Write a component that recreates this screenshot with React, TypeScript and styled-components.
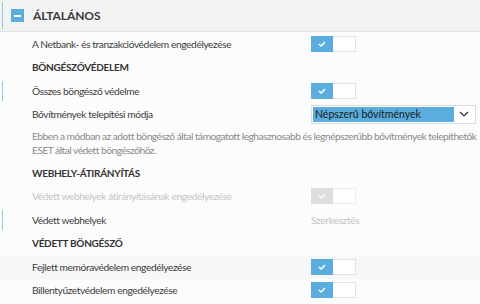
import styled, { createGlobalStyle } from 'styled-components';

const GlobalStyle = createGlobalStyle`
  html, body {
    margin: 0;
    padding: 0;
    background: #fcfcfc;
    font-family: Lato, "Open Sans", sans-serif;
    overflow: hidden;
  }
`;

const Page = styled.div`
  width: 480px;
  height: 304px;
  overflow: hidden;
  background: #fcfcfc;
`;

const Header = styled.div`
  position: relative;
  display: flex;
  align-items: center;
  gap: 9px;
  height: 32px;
  padding-left: 11px;
  background: #f3f3f3;
  border-bottom: 1px solid #e3e3e3;
  box-sizing: border-box;
`;

const Accent = styled.span`
  position: absolute;
  left: 2px;
  top: 2px;
  bottom: 2px;
  width: 1px;
  background: #8ccbdb;
`;

const Collapse = styled.span`
  width: 13px;
  height: 13px;
  background: #5aaddc;
  display: flex;
  align-items: center;
  justify-content: center;
  &::after {
    content: '';
    width: 7px;
    height: 2px;
    background: #fff;
  }
`;

const HeaderTitle = styled.span`
  font-size: 12px;
  font-weight: 700;
  color: #3a3a3a;
  letter-spacing: -0.1px;
`;

const Row = styled.div<{ $shade?: boolean }>`
  position: relative;
  display: grid;
  grid-template-columns: 311px 1fr;
  align-items: center;
  height: 23.5px;
  background: ${({ $shade }) => ($shade ? '#f7f7f7' : 'transparent')};
`;

const Label = styled.span<{ $muted?: boolean }>`
  padding-left: 32px;
  font-size: 10.2px;
  letter-spacing: -0.4px;
  color: ${({ $muted }) => ($muted ? '#c4c4c4' : '#3c3c3c')};
  white-space: nowrap;
`;

const Section = styled.div`
  display: flex;
  align-items: center;
  height: 23.5px;
  padding-left: 32px;
  font-size: 10px;
  font-weight: 700;
  letter-spacing: -0.3px;
  color: #333;
`;

const Toggle = styled.span<{ $disabled?: boolean }>`
  display: flex;
  width: 45px;
  height: 16px;
  box-sizing: border-box;
  border: 1px solid ${({ $disabled }) => ($disabled ? '#ececec' : '#e2e2e2')};
  background: #fff;
`;

const ToggleOn = styled.span<{ $disabled?: boolean }>`
  width: 22px;
  margin: -1px 0 -1px -1px;
  background: ${({ $disabled }) => ($disabled ? '#dedede' : '#5aaddc')};
  display: flex;
  align-items: center;
  justify-content: center;
`;

const Select = styled.div`
  display: flex;
  align-items: center;
  width: 165px;
  height: 19px;
  box-sizing: border-box;
  border: 1px solid #dcdcdc;
  background: #fff;
  padding: 1px;
`;

const SelectValue = styled.span`
  flex: 1;
  height: 100%;
  background: #5aaddc;
  color: #1a1a1a;
  font-size: 10.5px;
  display: flex;
  align-items: center;
  padding-left: 2px;
`;

const SelectArrow = styled.span`
  width: 20px;
  display: flex;
  justify-content: center;
  align-items: center;
`;

const Description = styled.div`
  padding: 3px 0 4px 32px;
  font-size: 10.2px;
  letter-spacing: -0.5px;
  line-height: 14px;
  color: #8a8a8a;
  white-space: nowrap;
`;

const LinkText = styled.span`
  font-size: 10px;
  letter-spacing: -0.2px;
  color: #c2c2c2;
`;

function Check() {
  return (
    <svg width="8" height="6" viewBox="0 0 8 6">
      <path d="M1 3 L3.2 5 L7 1" stroke="#fff" strokeWidth="1.4" fill="none" />
    </svg>
  );
}

function Switch({ disabled }: { disabled?: boolean }) {
  return (
    <Toggle $disabled={disabled}>
      <ToggleOn $disabled={disabled}>
        <Check />
      </ToggleOn>
    </Toggle>
  );
}

export default function App() {
  return (
    <Page>
      <GlobalStyle />
      <Header>
        <Accent />
        <Collapse />
        <HeaderTitle>ÁLTALÁNOS</HeaderTitle>
      </Header>
      <Row>
        <Label>A Netbank- és tranzakcióvédelem engedélyezése</Label>
        <Switch />
      </Row>
      <Section>BÖNGÉSZŐVÉDELEM</Section>
      <Row>
        <Accent />
        <Label>Összes böngésző védelme</Label>
        <Switch />
      </Row>
      <Row>
        <Label>Bővítmények telepítési módja</Label>
        <Select>
          <SelectValue>Népszerű bővítmények</SelectValue>
          <SelectArrow>
            <svg width="10" height="6" viewBox="0 0 10 6">
              <path d="M1 1 L5 5 L9 1" stroke="#333" strokeWidth="1.2" fill="none" />
            </svg>
          </SelectArrow>
        </Select>
      </Row>
      <Description>
        Ebben a módban az adott böngésző által támogatott leghasznosabb és legnépszerűbb bővítmények telepíthetők
        <br />
        ESET által védett böngészőhöz.
      </Description>
      <Section>WEBHELY-ÁTIRÁNYÍTÁS</Section>
      <Row>
        <Label $muted>Védett webhelyek átirányításának engedélyezése</Label>
        <Switch disabled />
      </Row>
      <Row>
        <Accent />
        <Label>Védett webhelyek</Label>
        <LinkText>Szerkesztés</LinkText>
      </Row>
      <Section>VÉDETT BÖNGÉSZŐ</Section>
      <Row $shade>
        <Label>Fejlett memóravédelem engedélyezése</Label>
        <Switch />
      </Row>
      <Row>
        <Label>Billentyűzetvédelem engedélyezése</Label>
        <Switch />
      </Row>
    </Page>
  );
}
